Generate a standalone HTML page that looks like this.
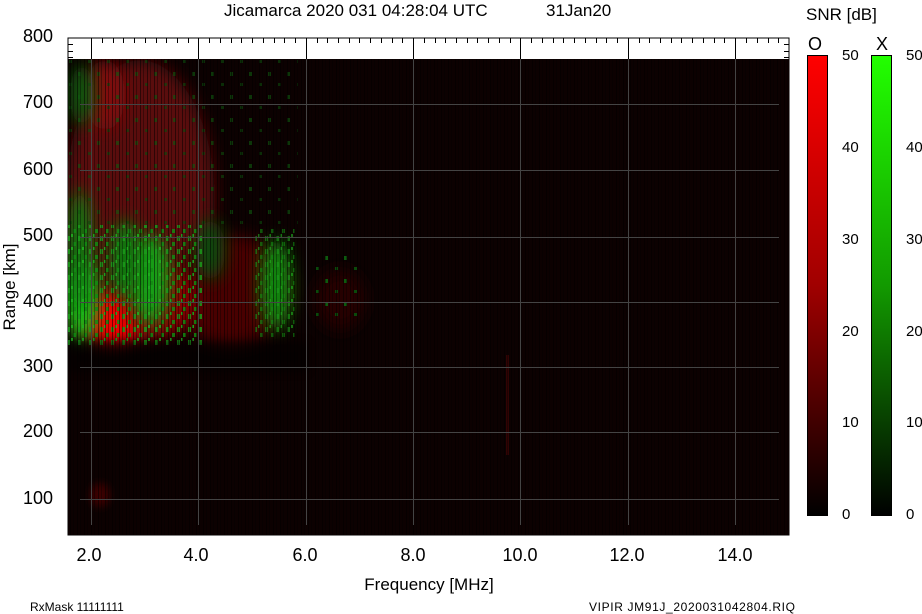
<!DOCTYPE html>
<html><head><meta charset="utf-8"><style>
html,body{margin:0;padding:0;background:#fff;width:922px;height:614px;overflow:hidden}
svg{display:block}
text{font-family:"Liberation Sans",Arial,sans-serif;fill:#000}
</style></head><body>
<svg width="922" height="614" viewBox="0 0 922 614" xmlns="http://www.w3.org/2000/svg">
<defs>
<filter id="b8" x="-50%" y="-50%" width="200%" height="200%"><feGaussianBlur stdDeviation="8"/></filter>
<filter id="b4" x="-50%" y="-50%" width="200%" height="200%"><feGaussianBlur stdDeviation="4"/></filter>
<pattern id="vs" width="7" height="40" patternUnits="userSpaceOnUse">
<rect x="0" y="0" width="1" height="40" fill="#000" opacity="0.5"/>
<rect x="3" y="0" width="1" height="40" fill="#000" opacity="0.35"/>
</pattern>
<pattern id="gd" width="11" height="13" patternUnits="userSpaceOnUse">
<rect x="1" y="2" width="3" height="5" fill="#1a9a1a"/>
<rect x="7" y="8" width="3" height="4" fill="#128a12"/>
<rect x="5" y="0" width="2" height="3" fill="#1fb01f"/>
</pattern>
<pattern id="gd2" width="19" height="23" patternUnits="userSpaceOnUse">
<rect x="2" y="3" width="3" height="4" fill="#0e5a0e"/>
<rect x="12" y="14" width="3" height="3" fill="#0b4a0b"/>
</pattern>
<linearGradient id="rg" x1="0" y1="0" x2="0" y2="1"><stop offset="0" stop-color="#ff0000"/><stop offset="0.5" stop-color="#a00000"/><stop offset="1" stop-color="#000"/></linearGradient>
<linearGradient id="gg" x1="0" y1="0" x2="0" y2="1"><stop offset="0" stop-color="#22ff00"/><stop offset="0.5" stop-color="#129a00"/><stop offset="1" stop-color="#000"/></linearGradient>
<clipPath id="pc"><rect x="68" y="59" width="721" height="476"/></clipPath>
</defs>

<text x="224" y="16" font-size="17">Jicamarca 2020 031 04:28:04 UTC</text>
<text x="546" y="16" font-size="17">31Jan20</text>
<text x="806" y="20" font-size="17">SNR [dB]</text>

<rect x="68" y="38" width="721" height="497" fill="#fff" stroke="#000" stroke-width="1"/>
<g clip-path="url(#pc)">
<rect x="68" y="59" width="721" height="476" fill="#000"/>
<rect x="68" y="59" width="721" height="476" fill="#0c0101"/>
<ellipse cx="140" cy="200" rx="75" ry="140" fill="#5a0707" filter="url(#b8)"/>
<ellipse cx="230" cy="290" rx="60" ry="55" fill="#4a0505" filter="url(#b8)"/>
<ellipse cx="105" cy="95" rx="20" ry="35" fill="#800a0a" filter="url(#b8)"/>
<ellipse cx="112" cy="318" rx="34" ry="26" fill="#f00000" filter="url(#b8)"/>
<ellipse cx="160" cy="300" rx="35" ry="35" fill="#8a0404" filter="url(#b8)"/>
<ellipse cx="340" cy="300" rx="25" ry="30" fill="#250303" filter="url(#b8)"/>
<ellipse cx="100" cy="495" rx="10" ry="12" fill="#3a0505" filter="url(#b4)"/>
<rect x="506" y="355" width="3" height="100" fill="#300303"/>
<ellipse cx="82" cy="300" rx="16" ry="40" fill="#16c016" filter="url(#b8)"/>
<ellipse cx="80" cy="250" rx="12" ry="60" fill="#0e7a0e" filter="url(#b8)"/>
<ellipse cx="150" cy="280" rx="20" ry="45" fill="#12a012" filter="url(#b8)"/>
<ellipse cx="125" cy="260" rx="15" ry="40" fill="#0e7a0e" filter="url(#b8)"/>
<ellipse cx="276" cy="285" rx="15" ry="45" fill="#0e8a0e" filter="url(#b8)"/>
<ellipse cx="82" cy="95" rx="12" ry="30" fill="#0c5a0c" filter="url(#b8)"/>
<ellipse cx="210" cy="250" rx="15" ry="30" fill="#0a4a0a" filter="url(#b8)"/>
<rect x="68" y="225" width="135" height="120" fill="url(#gd)" opacity="0.85"/>
<rect x="255" y="228" width="40" height="110" fill="url(#gd)" opacity="0.6"/>
<rect x="68" y="59" width="230" height="170" fill="url(#gd2)" opacity="0.6"/>
<rect x="310" y="250" width="50" height="70" fill="url(#gd2)"/>
<rect x="68" y="59" width="721" height="476" fill="url(#vs)"/>
<rect x="68" y="342" width="240" height="30" fill="#000" opacity="0.5" filter="url(#b4)"/>
</g>
<g stroke="#444" stroke-width="1">
<line x1="91.5" y1="38" x2="91.5" y2="525"/>
<line x1="198.5" y1="38" x2="198.5" y2="525"/>
<line x1="306.5" y1="38" x2="306.5" y2="525"/>
<line x1="413.5" y1="38" x2="413.5" y2="525"/>
<line x1="520.5" y1="38" x2="520.5" y2="525"/>
<line x1="628.5" y1="38" x2="628.5" y2="525"/>
<line x1="735.5" y1="38" x2="735.5" y2="525"/>
<line x1="80" y1="104.5" x2="779" y2="104.5"/>
<line x1="80" y1="170.5" x2="779" y2="170.5"/>
<line x1="80" y1="237.5" x2="779" y2="237.5"/>
<line x1="80" y1="302.5" x2="779" y2="302.5"/>
<line x1="80" y1="367.5" x2="779" y2="367.5"/>
<line x1="80" y1="432.5" x2="779" y2="432.5"/>
<line x1="80" y1="499.5" x2="779" y2="499.5"/>
</g>
<g stroke="#000" stroke-width="1">
<line x1="91.5" y1="38" x2="91.5" y2="59"/><line x1="198.5" y1="38" x2="198.5" y2="59"/><line x1="306.5" y1="38" x2="306.5" y2="59"/><line x1="413.5" y1="38" x2="413.5" y2="59"/><line x1="520.5" y1="38" x2="520.5" y2="59"/><line x1="628.5" y1="38" x2="628.5" y2="59"/><line x1="735.5" y1="38" x2="735.5" y2="59"/>
<path d="M102.5 38v5M113.5 38v5M123.5 38v5M134.5 38v5M145.5 38v5M156.5 38v5M166.5 38v5M177.5 38v5M188.5 38v5M209.5 38v5M220.5 38v5M231.5 38v5M241.5 38v5M252.5 38v5M263.5 38v5M274.5 38v5M284.5 38v5M295.5 38v5M317.5 38v5M327.5 38v5M338.5 38v5M349.5 38v5M359.5 38v5M370.5 38v5M381.5 38v5M392.5 38v5M402.5 38v5M424.5 38v5M435.5 38v5M445.5 38v5M456.5 38v5M467.5 38v5M477.5 38v5M488.5 38v5M499.5 38v5M510.5 38v5M531.5 38v5M542.5 38v5M553.5 38v5M563.5 38v5M574.5 38v5M585.5 38v5M596.5 38v5M606.5 38v5M617.5 38v5M639.5 38v5M649.5 38v5M660.5 38v5M671.5 38v5M681.5 38v5M692.5 38v5M703.5 38v5M714.5 38v5M724.5 38v5M746.5 38v5M757.5 38v5M768.5 38v5M778.5 38v5"/>
<path d="M68 44.5h5M68 51.5h5M68 57.5h5M784 44.5h5M784 51.5h5M784 57.5h5"/>
</g>
<g font-size="18" text-anchor="end">
<text x="53" y="42">800</text><text x="53" y="108">700</text><text x="53" y="175">600</text><text x="53" y="241">500</text><text x="53" y="307">400</text><text x="53" y="372">300</text><text x="53" y="437">200</text><text x="53" y="504">100</text>
</g>
<text transform="translate(15,287) rotate(-90)" font-size="17" text-anchor="middle">Range [km]</text>
<g font-size="18" text-anchor="middle">
<text x="89" y="561">2.0</text><text x="196" y="561">4.0</text><text x="305" y="561">6.0</text><text x="413" y="561">8.0</text><text x="520" y="561">10.0</text><text x="627" y="561">12.0</text><text x="735" y="561">14.0</text>
</g>
<text x="429" y="590" font-size="17" text-anchor="middle">Frequency [MHz]</text>
<text x="30" y="611" font-size="12">RxMask 11111111</text>
<text x="795" y="611" font-size="12" text-anchor="end" textLength="206">VIPIR  JM91J_2020031042804.RIQ</text>

<text x="808" y="50" font-size="18">O</text>
<text x="876" y="50" font-size="18">X</text>
<rect x="807.5" y="55.5" width="20" height="460" fill="url(#rg)" stroke="#000"/>
<rect x="871.5" y="55.5" width="20" height="460" fill="url(#gg)" stroke="#000"/>
<g font-size="15">
<text x="842" y="60">50</text><text x="842" y="152">40</text><text x="842" y="244">30</text><text x="842" y="336">20</text><text x="842" y="427">10</text><text x="842" y="519">0</text>
<text x="906" y="60">50</text><text x="906" y="152">40</text><text x="906" y="244">30</text><text x="906" y="336">20</text><text x="906" y="427">10</text><text x="906" y="519">0</text>
</g>
</svg>
</body></html>
